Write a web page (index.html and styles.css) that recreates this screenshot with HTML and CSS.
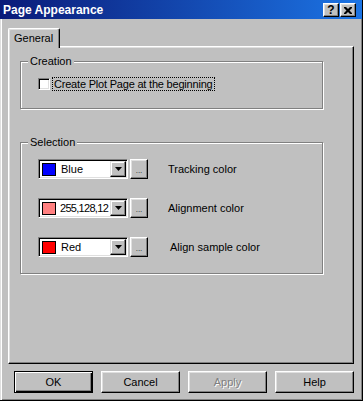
FILE: index.html
```html
<!DOCTYPE html>
<html lang="en">
<head>
    <meta charset="UTF-8">
    <title>Page Appearance</title>
    <link rel="stylesheet" href="styles.css">
</head>
<body>
    <div class="dialog">
        <div class="titlebar">
            <span class="title">Page Appearance</span>
            <div class="caption-buttons">
                <span class="caption-btn help">?</span>
                <span class="caption-btn">
                    <svg width="8" height="7" viewBox="0 0 8 7"><path d="M0 0h2l2 2 2-2h2v1l-2.5 2.5 2.5 2.5v1h-2l-2-2-2 2h-2v-1l2.5-2.5-2.5-2.5z" fill="#000"/></svg>
                </span>
            </div>
        </div>

        <div class="content">
            <div class="tabs">
                <div class="tab active">General</div>
            </div>

            <div class="panel">
                <fieldset class="group">
                    <legend>Creation</legend>
                    <div class="group-body creation">
                        <label class="check-row">
                            <span class="checkbox"></span>
                            <span class="focus">Create Plot Page at the beginning</span>
                        </label>
                    </div>
                </fieldset>

                <fieldset class="group selection">
                    <legend>Selection</legend>
                    <div class="group-body rows">
                        <div class="color-row">
                            <div class="combo">
                                <span class="swatch" style="background:#0000ff"></span>
                                <span class="combo-text">Blue</span>
                                <span class="drop-btn"><svg width="7" height="4" viewBox="0 0 7 4"><path d="M0 0h7L3.5 4z" fill="#000"/></svg></span>
                            </div>
                            <span class="dots-btn">...</span>
                            <span class="row-label">Tracking color</span>
                        </div>
                        <div class="color-row">
                            <div class="combo">
                                <span class="swatch" style="background:#ff8080"></span>
                                <span class="combo-text tight">255,128,12</span>
                                <span class="drop-btn"><svg width="7" height="4" viewBox="0 0 7 4"><path d="M0 0h7L3.5 4z" fill="#000"/></svg></span>
                            </div>
                            <span class="dots-btn">...</span>
                            <span class="row-label">Alignment color</span>
                        </div>
                        <div class="color-row">
                            <div class="combo">
                                <span class="swatch" style="background:#ff0000"></span>
                                <span class="combo-text">Red</span>
                                <span class="drop-btn"><svg width="7" height="4" viewBox="0 0 7 4"><path d="M0 0h7L3.5 4z" fill="#000"/></svg></span>
                            </div>
                            <span class="dots-btn">...</span>
                            <span class="row-label shifted">Align sample color</span>
                        </div>
                    </div>
                </fieldset>
            </div>

            <div class="buttons">
                <button class="btn default">OK</button>
                <button class="btn">Cancel</button>
                <button class="btn" disabled>Apply</button>
                <button class="btn">Help</button>
            </div>
        </div>
    </div>
</body>
</html>
```

FILE: styles.css
```css
body {
    margin: 0;
    font-family: 'Liberation Sans', Arial, sans-serif;
    font-size: 11px;
    color: #000;
    background-color: #c0c0c0;
}

.dialog {
    width: 363px;
    height: 401px;
    box-sizing: border-box;
    background-color: #c0c0c0;
    border-right: 1px solid #000;
    border-bottom: 1px solid #000;
    box-shadow: inset 1px 0 #dfdfdf, inset 2px 0 #fff, inset -1px -1px #808080;
}

.titlebar {
    height: 19px;
    display: flex;
    align-items: center;
    justify-content: space-between;
    padding: 0 6px 0 3px;
    background: linear-gradient(to right, #0a1a78, #1c74e4);
    color: #fff;
}

.title {
    font-size: 12px;
    font-weight: bold;
}

.caption-buttons {
    display: flex;
    gap: 1px;
    margin-top: 1px;
}

.caption-btn {
    width: 16px;
    height: 14px;
    box-sizing: border-box;
    display: flex;
    align-items: center;
    justify-content: center;
    background-color: #c0c0c0;
    border: 1px solid;
    border-color: #fff #000 #000 #fff;
    box-shadow: inset -1px -1px #808080, inset 1px 1px #dfdfdf;
    color: #000;
    font-weight: bold;
    font-size: 12px;
}

.content {
    padding: 9px 8px 0 8px;
}

.tabs {
    display: flex;
    height: 18px;
}

.tab {
    position: relative;
    z-index: 1;
    width: 52px;
    height: 20px;
    box-sizing: border-box;
    padding: 3px 0 0 5px;
    background-color: #c0c0c0;
    border-top: 1px solid #fff;
    border-left: 1px solid #fff;
    border-right: 1px solid #000;
    border-radius: 2px 2px 0 0;
    box-shadow: inset -1px 0 #808080, inset 1px 1px #dfdfdf;
}

.panel {
    height: 318px;
    box-sizing: border-box;
    padding: 8px 30px 0 11px;
    border: 1px solid;
    border-color: #fff #000 #000 #fff;
    box-shadow: inset -1px -1px #808080, inset 1px 1px #dfdfdf;
}

.group {
    margin: 0;
    padding: 0;
    border: 1px solid #808080;
    box-shadow: inset 1px 1px #fff, 1px 1px #fff;
}

.group legend {
    margin-left: 7px;
    padding: 0 2px;
    line-height: 13px;
    background-color: #c0c0c0;
}

.selection {
    margin-top: 27px;
}

.group-body.creation {
    padding: 9px 0 17px 17px;
}

.group-body.rows {
    padding: 10px 0 16px 17px;
    display: flex;
    flex-direction: column;
    gap: 19px;
}

.check-row {
    display: flex;
    align-items: center;
    gap: 2px;
}

.checkbox {
    width: 12px;
    height: 12px;
    box-sizing: border-box;
    background-color: #fff;
    border: 1px solid;
    border-color: #808080 #fff #fff #808080;
    box-shadow: inset 1px 1px #000, inset -1px -1px #dfdfdf;
}

.focus {
    border: 1px dotted #000;
    padding: 0 1px;
    line-height: 12px;
    letter-spacing: -0.2px;
}

.color-row {
    display: flex;
    align-items: center;
    height: 20px;
}

.combo {
    width: 90px;
    height: 20px;
    box-sizing: border-box;
    display: flex;
    align-items: center;
    background-color: #fff;
    border: 1px solid;
    border-color: #808080 #fff #fff #808080;
    box-shadow: inset 1px 1px #000, inset -1px -1px #dfdfdf;
    padding: 1px;
}

.swatch {
    flex: none;
    width: 14px;
    height: 13px;
    box-sizing: border-box;
    margin-left: 2px;
    border: 1px solid #000;
}

.combo-text {
    flex: 1;
    min-width: 0;
    margin-left: 5px;
    white-space: nowrap;
}

.combo-text.tight {
    margin-left: 4px;
    letter-spacing: -0.7px;
}

.drop-btn {
    flex: none;
    width: 16px;
    height: 16px;
    box-sizing: border-box;
    display: flex;
    align-items: center;
    justify-content: center;
    background-color: #c0c0c0;
    border: 1px solid;
    border-color: #dfdfdf #000 #000 #dfdfdf;
    box-shadow: inset -1px -1px #808080, inset 1px 1px #fff;
}

.dots-btn {
    width: 18px;
    height: 20px;
    box-sizing: border-box;
    margin-left: 2px;
    padding-top: 7px;
    text-align: center;
    font-size: 8px;
    line-height: 8px;
    color: #202020;
    background-color: #c0c0c0;
    border: 1px solid;
    border-color: #fff #000 #000 #fff;
    box-shadow: inset -1px -1px #808080, inset 1px 1px #dfdfdf;
}

.row-label {
    margin-left: 20px;
}

.row-label.shifted {
    margin-left: 22px;
}

.buttons {
    display: flex;
    gap: 8px;
    margin: 7px 0 0 6px;
}

.btn {
    width: 79px;
    height: 22px;
    box-sizing: border-box;
    padding: 0;
    font-family: 'Liberation Sans', Arial, sans-serif;
    font-size: 11px;
    color: #000;
    background-color: #c0c0c0;
    border: 1px solid;
    border-color: #fff #000 #000 #fff;
    box-shadow: inset -1px -1px #808080, inset 1px 1px #dfdfdf;
}

.btn.default {
    border-color: #000;
    box-shadow: inset 1px 1px #fff, inset -1px -1px #000, inset -2px -2px #808080;
}

.btn:disabled {
    color: #808080;
    text-shadow: 1px 1px #fff;
}
```
